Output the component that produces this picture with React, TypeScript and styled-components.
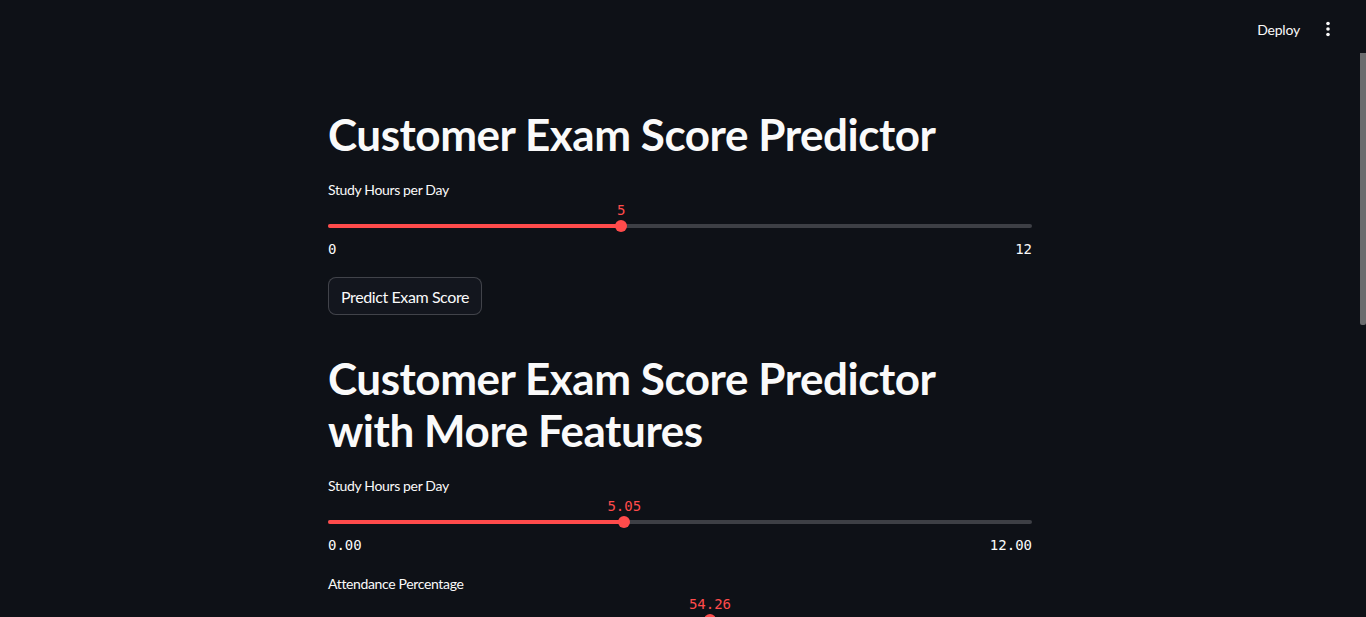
import React from 'react';
import styled, { createGlobalStyle } from 'styled-components';

const GlobalStyle = createGlobalStyle`
  html, body {
    margin: 0;
    padding: 0;
    height: 100%;
    background: #0e1117;
  }
  body {
    font-family: Lato, "Noto Sans", sans-serif;
    color: #fafafa;
    overflow: hidden;
  }
  #root {
    height: 100%;
  }
`;

const Shell = styled.div`
  height: 617px;
  display: flex;
  flex-direction: column;
  background: #0e1117;
`;

const Header = styled.header`
  height: 53px;
  flex-shrink: 0;
  box-sizing: border-box;
  padding: 5px 26px 0 0;
  display: flex;
  justify-content: flex-end;
  align-items: center;
  gap: 4px;
`;

const DeployButton = styled.button`
  height: 32px;
  padding: 0 12px;
  border: none;
  background: transparent;
  color: #fafafa;
  font-family: Lato, "Noto Sans", sans-serif;
  font-size: 14px;
  letter-spacing: -0.2px;
  cursor: pointer;
`;

const MenuButton = styled.button`
  width: 24px;
  height: 24px;
  padding: 0;
  border: none;
  background: transparent;
  color: #fafafa;
  display: flex;
  align-items: center;
  justify-content: center;
`;

const Body = styled.div`
  flex: 1;
  min-height: 0;
  display: flex;
`;

const Main = styled.main`
  flex: 1;
  min-width: 0;
  overflow: hidden;
`;

const ScrollGutter = styled.div`
  width: 6px;
  flex-shrink: 0;
`;

const ScrollThumb = styled.div<{ $length: number }>`
  height: ${(p) => p.$length}px;
  background: #6b6c6e;
  border-radius: 0 0 2px 2px;
`;

const Column = styled.div`
  width: 704px;
  margin: 0 auto;
  padding: 34px 0 147px;
  display: flex;
  flex-direction: column;
  gap: 16px;
`;

const Title = styled.h1`
  margin: 0;
  padding: 21px 0 3px;
  font-size: 44px;
  line-height: 52px;
  font-weight: 700;
  letter-spacing: -0.45px;
  color: #fafafa;
`;

const Widget = styled.div`
  display: flex;
  flex-direction: column;
`;

const Label = styled.label`
  height: 22px;
  font-size: 14px;
  line-height: 22px;
  letter-spacing: -0.35px;
  color: #fafafa;
`;

const Rail = styled.div`
  position: relative;
  height: 40px;
`;

const Track = styled.div`
  margin-top: 23px;
  height: 4px;
  border-radius: 2px;
  background: #3d3f45;
  overflow: hidden;
`;

const Fill = styled.div`
  height: 100%;
  background: #ff4b4b;
`;

const Thumb = styled.div`
  position: absolute;
  top: 19px;
  width: 12px;
  height: 12px;
  margin-left: -6px;
  border-radius: 50%;
  background: #ff4b4b;
`;

const ValueTag = styled.div`
  position: absolute;
  top: 1px;
  transform: translateX(-50%);
  font-family: "DejaVu Sans Mono", "Liberation Mono", monospace;
  font-size: 14px;
  line-height: 16px;
  color: #ff4b4b;
  white-space: nowrap;
`;

const Ticks = styled.div`
  height: 20px;
  display: flex;
  justify-content: space-between;
  font-family: "DejaVu Sans Mono", "Liberation Mono", monospace;
  font-size: 14px;
  line-height: 17px;
  color: #fafafa;
`;

const Button = styled.button`
  align-self: flex-start;
  height: 38px;
  padding: 0 12px;
  border: 1px solid rgba(250, 250, 250, 0.2);
  border-radius: 8px;
  background: #13161e;
  color: #fafafa;
  font-family: Lato, "Noto Sans", sans-serif;
  font-size: 16px;
  letter-spacing: -0.4px;
  cursor: pointer;
`;

type SliderProps = {
  label: string;
  value: number;
  min: number;
  max: number;
  digits: number;
};

function Slider({ label, value, min, max, digits }: SliderProps) {
  const pct = ((value - min) / (max - min)) * 100;
  const fmt = (n: number) => n.toFixed(digits);
  return (
    <Widget>
      <Label>{label}</Label>
      <Rail>
        <ValueTag style={{ left: `${pct}%` }}>{fmt(value)}</ValueTag>
        <Track>
          <Fill style={{ width: `${pct}%` }} />
        </Track>
        <Thumb style={{ left: `${pct}%` }} />
      </Rail>
      <Ticks>
        <span>{fmt(min)}</span>
        <span>{fmt(max)}</span>
      </Ticks>
    </Widget>
  );
}

export default function App() {
  return (
    <Shell>
      <GlobalStyle />
      <Header>
        <DeployButton>Deploy</DeployButton>
        <MenuButton aria-label="Main menu">
          <svg width="4" height="16" viewBox="0 0 4 16" fill="currentColor">
            <circle cx="2" cy="2.5" r="1.8" />
            <circle cx="2" cy="8" r="1.8" />
            <circle cx="2" cy="13.5" r="1.8" />
          </svg>
        </MenuButton>
      </Header>
      <Body>
        <Main>
          <Column>
            <Title>Customer Exam Score Predictor</Title>
            <Slider label="Study Hours per Day" value={5} min={0} max={12} digits={0} />
            <Button>Predict Exam Score</Button>

            <Title>
              Customer Exam Score Predictor
              <br />
              with More Features
            </Title>
            <Slider label="Study Hours per Day" value={5.05} min={0} max={12} digits={2} />
            <Slider label="Attendance Percentage" value={54.26} min={0} max={100} digits={2} />
            <Slider label="Sleep Hours per Day" value={7.02} min={0} max={12} digits={2} />
            <Slider label="Previous Exam Score" value={68.4} min={0} max={100} digits={2} />
            <Button>Predict Exam Score</Button>
          </Column>
        </Main>
        <ScrollGutter>
          <ScrollThumb $length={272} />
        </ScrollGutter>
      </Body>
    </Shell>
  );
}
